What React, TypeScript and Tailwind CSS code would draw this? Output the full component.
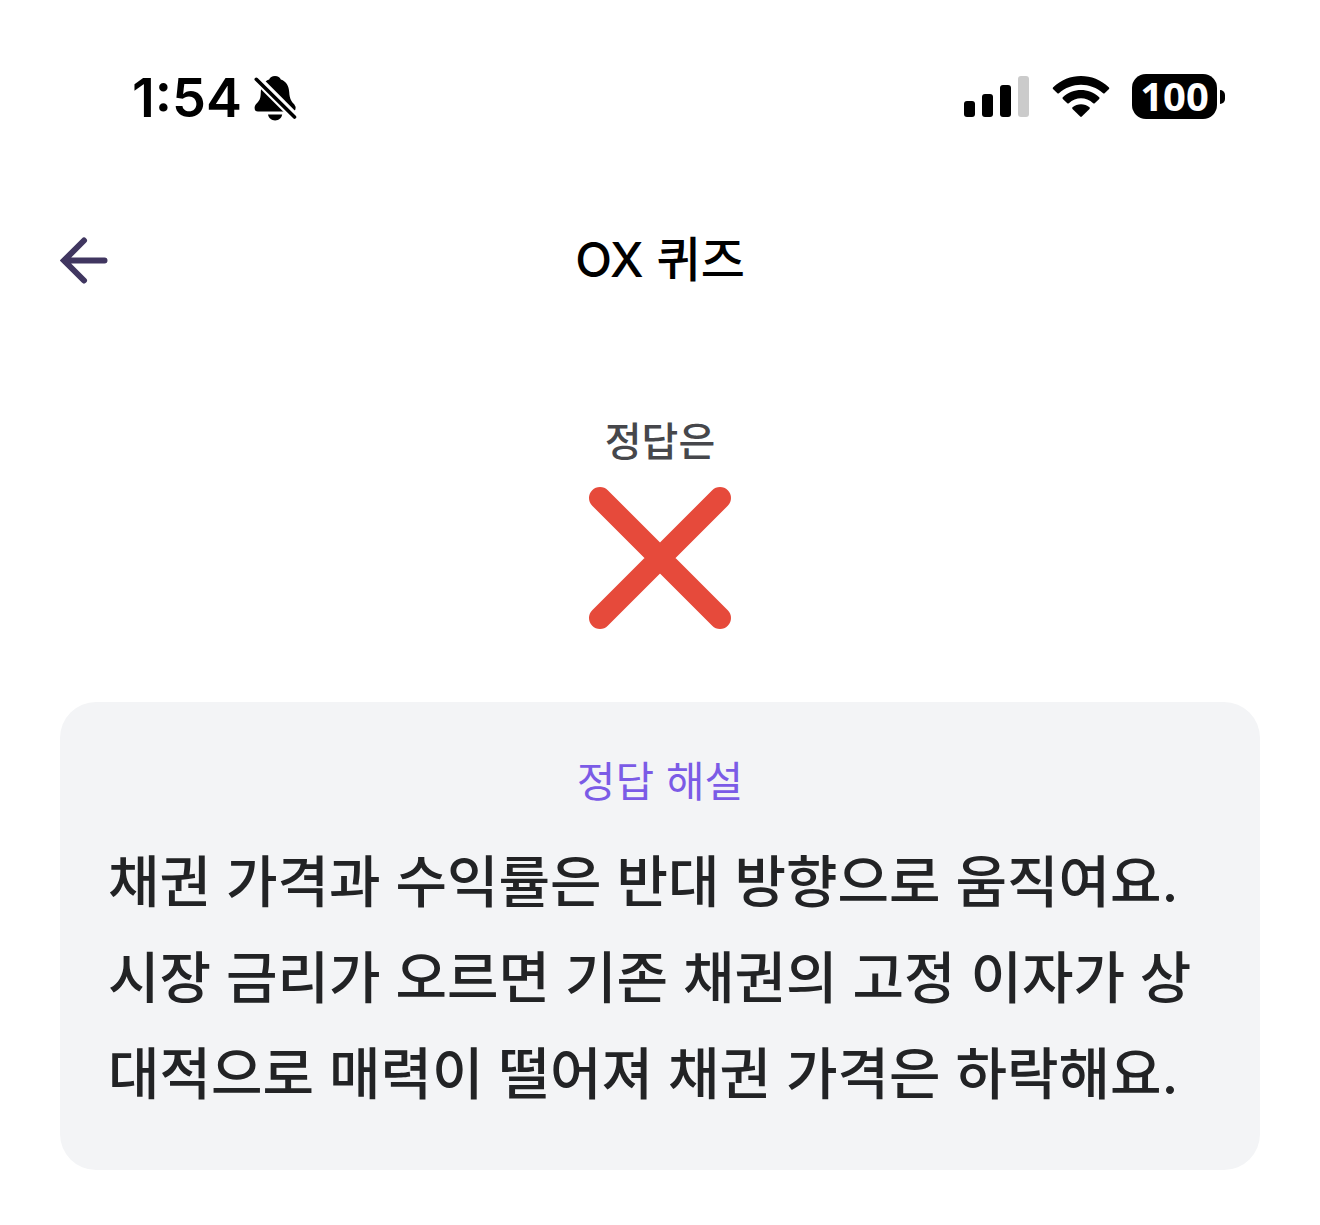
import React from 'react';

const SignalIcon: React.FC = () => (
  <svg width="66" height="42" viewBox="0 0 66 42" aria-hidden="true">
    <rect x="0" y="25" width="11" height="16" rx="3" />
    <rect x="18" y="18" width="11" height="23" rx="3" />
    <rect x="36" y="9" width="11" height="32" rx="3" />
    <rect x="54" y="0" width="11" height="41" rx="3" fill="#cbcbcb" />
  </svg>
);

const WifiIcon: React.FC = () => (
  <svg width="58" height="42" viewBox="0 0 58 42" aria-hidden="true">
    <path d="M1 11.5C17-3.8 41-3.8 57 11.5Q57.6 12.3 57 13L52.6 17.2Q51.9 17.8 51.1 17.2C38.5 5.8 19.5 5.8 6.9 17.2Q6.1 17.8 5.4 17.2L1 13Q.4 12.3 1 11.5Z" />
    <path d="M10.8 21.3C21.5 11.6 36.5 11.6 47.2 21.3Q47.9 22.1 47.2 22.9L42.7 27.3Q42 27.8 41.2 27.2C34 20.7 24 20.7 16.8 27.2Q16 27.8 15.3 27.3L10.8 22.9Q10.1 22.1 10.8 21.3Z" />
    <path d="M20.5 31.3C25.3 27.2 32.7 27.2 37.5 31.3Q38.2 32.1 37.5 32.9L29.8 40.6Q29 41.3 28.2 40.6L20.5 32.9Q19.8 32.1 20.5 31.3Z" />
  </svg>
);

const SilentIcon: React.FC = () => (
  <svg width="44" height="46" viewBox="0 0 44 46" aria-hidden="true">
    <path d="M21 1C24 1 26 2.3 26.8 4.5C32.5 6.5 34.8 11 35.2 17C35.6 24 37.5 26.5 40.2 29.2Q42.2 31.5 41.4 34.5Q40.6 36.5 38 36.5H4Q.6 36.5.6 33C.6 30 2.5 28.8 4 27C6.7 23.8 6.6 21 6.8 17C7.2 11 9.5 6.5 15.2 4.5C16 2.3 18 1 21 1Z" />
    <path d="M14 39.5H28.2C27.5 43.2 24.8 45.4 21.1 45.4C17.4 45.4 14.7 43.2 14 39.5Z" />
    <path d="M0 1L44 45" stroke="#fff" strokeWidth="9" />
    <path d="M2.3 4.3L40.5 42" stroke="#000" strokeWidth="3.6" strokeLinecap="round" />
  </svg>
);

const StatusBar: React.FC = () => (
  <div className="flex items-center justify-between pt-16 pr-[95px] pl-33">
    <div className="flex items-center gap-3">
      <span className="text-[54px] leading-[68px] font-semibold">1:54</span>
      <SilentIcon />
    </div>
    <div className="flex items-center gap-[22px] pb-[3px]">
      <SignalIcon />
      <WifiIcon />
      <div className="flex items-center gap-[3px]">
        <span className="flex h-[45px] w-[85px] items-start justify-center rounded-[14px] bg-black font-['Noto_Sans',sans-serif] text-[40px] leading-[43px] font-bold text-white">
          100
        </span>
        <span className="h-[14px] w-[5px] rounded-r-full bg-black" />
      </div>
    </div>
  </div>
);

const Header: React.FC = () => (
  <header className="mt-23 grid grid-cols-[48px_1fr_48px] items-center px-15">
    <button type="button" aria-label="뒤로 가기">
      <svg
        width="48"
        height="48"
        viewBox="0 0 48 48"
        fill="none"
        stroke="#403660"
        strokeWidth="6"
        strokeLinecap="round"
        strokeLinejoin="miter"
      >
        <path d="M24 4.5L4 24.5L24 44.5M5 24.5H44.5" />
      </svg>
    </button>
    <h1 className="text-center text-[48px] leading-[72px] font-medium">OX 퀴즈</h1>
  </header>
);

const App: React.FC = () => {
  return (
    <div className="min-h-screen bg-white font-['Inter','Noto_Sans_CJK_KR',sans-serif] text-black">
      <StatusBar />
      <Header />

      <main className="px-15 pt-[114px] pb-12">
        <section className="flex flex-col items-center gap-3">
          <p className="text-[40px] leading-[64px] font-medium text-[#46474b]">정답은</p>
          <svg width="144" height="144" viewBox="0 0 144 144" role="img" aria-label="X">
            <path d="M12 12L132 132M132 12L12 132" stroke="#e64a3b" strokeWidth="22" strokeLinecap="round" />
          </svg>
        </section>

        <section className="mt-18 rounded-[36px] bg-[#f3f4f6] p-12">
          <h2 className="text-center text-[42px] leading-[64px] font-normal text-[#7b5be6]">정답 해설</h2>
          <p className="mt-5 text-[56px] leading-[96px] font-medium text-[#222325]">
            채권 가격과 수익률은 반대 방향으로 움직여요. 시장 금리가 오르면 기존 채권의 고정 이자가 상대적으로 매력이 떨어져 채권 가격은 하락해요.
          </p>
        </section>
      </main>
    </div>
  );
};

export default App;
